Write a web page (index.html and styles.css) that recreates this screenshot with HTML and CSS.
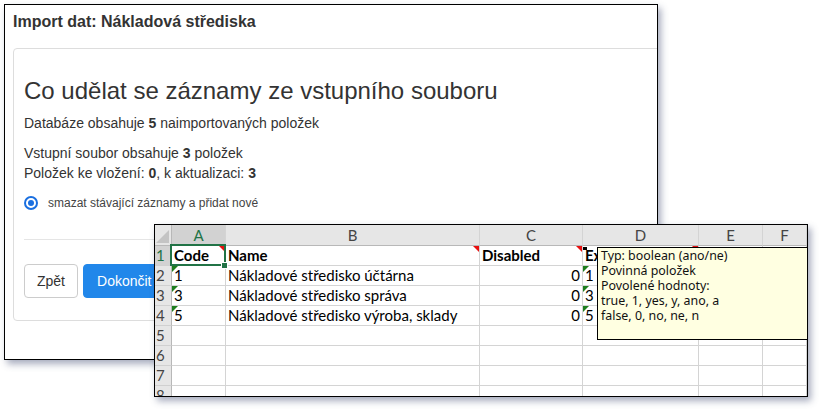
FILE: index.html
```html
<!DOCTYPE html>
<html lang="cs">
<head>
    <meta charset="UTF-8">
    <title>Import dat: Nákladová střediska</title>
    <link rel="stylesheet" href="styles.css">
</head>
<body>
    <!-- Dialog importu -->
    <div class="window">
        <h1 class="window-title">Import dat: Nákladová střediska</h1>

        <div class="panel">
            <h2 class="panel-heading">Co udělat se záznamy ze vstupního souboru</h2>
            <p class="info">Databáze obsahuje <b>5</b> naimportovaných položek</p>
            <p class="info">Vstupní soubor obsahuje <b>3</b> položek<br>Položek ke vložení: <b>0</b>, k aktualizaci: <b>3</b></p>

            <label class="option">
                <span class="radio"></span>
                smazat stávající záznamy a přidat nové
            </label>

            <hr class="divider">

            <div class="actions">
                <button class="btn">Zpět</button>
                <button class="btn btn-primary">Dokončit</button>
            </div>
        </div>
    </div>

    <!-- Náhled vstupního souboru v Excelu -->
    <div class="sheet">
        <div class="grid">
            <div class="corner"></div>
            <div class="col-head active">A</div>
            <div class="col-head">B</div>
            <div class="col-head">C</div>
            <div class="col-head">D</div>
            <div class="col-head">E</div>
            <div class="col-head">F</div>

            <div class="row-head active">1</div>
            <div class="cell bold note-mark">Code</div>
            <div class="cell bold note-mark">Name</div>
            <div class="cell bold note-mark">Disabled</div>
            <div class="cell bold note-mark">Ex</div>
            <div class="cell"></div>
            <div class="cell"></div>

            <div class="row-head">2</div>
            <div class="cell text-mark">1</div>
            <div class="cell">Nákladové středisko účtárna</div>
            <div class="cell num">0</div>
            <div class="cell text-mark">1</div>
            <div class="cell"></div>
            <div class="cell"></div>

            <div class="row-head">3</div>
            <div class="cell text-mark">3</div>
            <div class="cell">Nákladové středisko správa</div>
            <div class="cell num">0</div>
            <div class="cell text-mark">3</div>
            <div class="cell"></div>
            <div class="cell"></div>

            <div class="row-head">4</div>
            <div class="cell text-mark">5</div>
            <div class="cell">Nákladové středisko výroba, sklady</div>
            <div class="cell num">0</div>
            <div class="cell text-mark">5</div>
            <div class="cell"></div>
            <div class="cell"></div>

            <div class="row-head">5</div>
            <div class="cell"></div><div class="cell"></div><div class="cell"></div>
            <div class="cell"></div><div class="cell"></div><div class="cell"></div>

            <div class="row-head">6</div>
            <div class="cell"></div><div class="cell"></div><div class="cell"></div>
            <div class="cell"></div><div class="cell"></div><div class="cell"></div>

            <div class="row-head">7</div>
            <div class="cell"></div><div class="cell"></div><div class="cell"></div>
            <div class="cell"></div><div class="cell"></div><div class="cell"></div>

            <div class="row-head">8</div>
            <div class="cell"></div><div class="cell"></div><div class="cell"></div>
            <div class="cell"></div><div class="cell"></div><div class="cell"></div>
        </div>

        <!-- Výběr buňky A1 -->
        <div class="selection"></div>
        <div class="handle"></div>

        <!-- Komentář k buňce D1 -->
        <div class="note-anchor"></div>
        <div class="note">Typ: boolean (ano/ne)<br>Povinná položek<br>Povolené hodnoty:<br>true, 1, yes, y, ano, a<br>false, 0, no, ne, n</div>
    </div>
</body>
</html>
```

FILE: styles.css
```css
/* Základ */
body {
    margin: 0;
    width: 824px;
    height: 414px;
    overflow: hidden;
    position: relative;
    background: #ffffff;
    font-family: "Liberation Sans", Arial, sans-serif;
    color: #333333;
}

/* Okno dialogu */
.window {
    margin: 4px 0 0 4px;
    width: 654px;
    height: 356px;
    box-sizing: border-box;
    padding: 0 8px;
    border: 1px solid #000000;
    background: #ffffff;
    overflow: hidden;
    box-shadow: 3px 4px 7px rgba(60, 70, 110, 0.45);
}

.window-title {
    margin: 8px 0 17px;
    font-size: 16px;
    line-height: 18px;
    font-weight: bold;
}

/* Panel s volbami */
.panel {
    width: 700px;
    padding: 28px 10px 22px;
    border: 1px solid #dddddd;
    border-radius: 4px;
}

.panel-heading {
    margin: 0 0 8px;
    font-size: 24px;
    line-height: 28px;
    font-weight: normal;
}

.info {
    margin: 0 0 10px;
    font-size: 14px;
    line-height: 20px;
}

.option {
    display: flex;
    align-items: center;
    gap: 10px;
    margin-top: 12px;
    height: 16px;
    font-size: 12px;
    color: #444444;
}

.radio {
    width: 14px;
    height: 14px;
    box-sizing: border-box;
    border: 2px solid #1a6fe0;
    border-radius: 50%;
    display: flex;
    align-items: center;
    justify-content: center;
}

.radio::after {
    content: "";
    width: 6px;
    height: 6px;
    border-radius: 50%;
    background: #1a6fe0;
}

.divider {
    margin: 28px 0 24px;
    border: none;
    border-top: 1px solid #e5e5e5;
}

.actions {
    display: flex;
    gap: 5px;
}

.btn {
    height: 34px;
    padding: 0 12px;
    border: 1px solid #cccccc;
    border-radius: 4px;
    background: #ffffff;
    color: #333333;
    font-family: "Liberation Sans", Arial, sans-serif;
    font-size: 14px;
}

.btn-primary {
    padding: 0 13px;
    border-color: #2187ea;
    background: #2187ea;
    color: #ffffff;
}

/* Tabulka */
.sheet {
    position: absolute;
    left: 154px;
    top: 224px;
    width: 654px;
    height: 173px;
    box-sizing: border-box;
    border: 1px solid #000000;
    background: #ffffff;
    overflow: hidden;
    box-shadow: 3px 4px 7px rgba(60, 70, 110, 0.45);
    font-family: Lato, "Open Sans", sans-serif;
    font-size: 15px;
    color: #000000;
}

.grid {
    display: grid;
    grid-template-columns: 17px 54px 254px 103px 116px 64px 44px;
    grid-template-rows: 21px repeat(8, 20px);
}

.grid > div {
    box-sizing: border-box;
    border-right: 1px solid #d4d4d4;
    border-bottom: 1px solid #d4d4d4;
    line-height: 19px;
    white-space: nowrap;
    overflow: hidden;
    position: relative;
}

.corner,
.col-head,
.row-head {
    background: #e6e6e6;
    color: #444444;
}

.col-head {
    text-align: center;
    line-height: 20px !important;
    border-bottom-color: #b8b8b8 !important;
}

.corner {
    border-bottom-color: #b8b8b8 !important;
    border-right-color: #b8b8b8 !important;
}

.corner::after {
    content: "";
    position: absolute;
    right: 2px;
    bottom: 2px;
    width: 13px;
    height: 13px;
    background: #c4c4c4;
    clip-path: polygon(100% 0, 100% 100%, 0 100%);
}

.row-head {
    padding-left: 1px;
    border-right-color: #b8b8b8 !important;
    border-bottom-color: #d0d0d0 !important;
}

.col-head.active,
.row-head.active {
    background: #d2d2d2;
    color: #217346;
}

.cell {
    padding: 0 2px;
}

.cell.bold {
    font-weight: bold;
}

.cell.num {
    text-align: right;
}

/* Červený roh = komentář, zelený roh = číslo jako text */
.note-mark::after,
.text-mark::before {
    content: "";
    position: absolute;
    top: 0;
    width: 6px;
    height: 6px;
}

.note-mark::after {
    right: 0;
    background: #e81010;
    clip-path: polygon(0 0, 100% 0, 100% 100%);
}

.text-mark::before {
    left: 0;
    background: #1e7e1e;
    clip-path: polygon(0 0, 100% 0, 0 100%);
}

.selection {
    position: absolute;
    left: 15px;
    top: 19px;
    width: 56px;
    height: 22px;
    box-sizing: border-box;
    border: 2px solid #217346;
}

.handle {
    position: absolute;
    left: 66px;
    top: 37px;
    width: 5px;
    height: 5px;
    background: #217346;
    border: 1px solid #ffffff;
}

.note-anchor {
    position: absolute;
    left: 428px;
    top: 22px;
    width: 4px;
    height: 3px;
    background: #000000;
}

.note {
    position: absolute;
    left: 442px;
    top: 22px;
    width: 240px;
    height: 93px;
    box-sizing: border-box;
    padding: 0 3px;
    border: 1px solid #000000;
    background: #ffffe1;
    font-family: "Noto Sans", "Open Sans", sans-serif;
    font-size: 12.4px;
    line-height: 15px;
    color: #111111;
}
```
